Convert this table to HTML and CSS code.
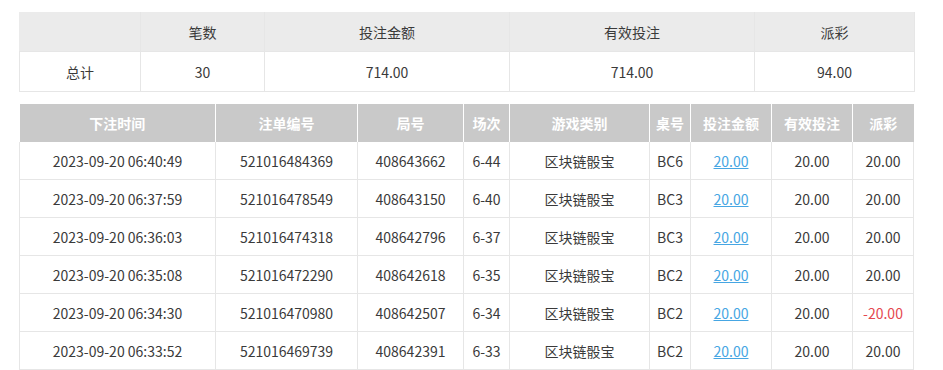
FILE: index.html
```html
<!DOCTYPE html>
<html lang="zh-CN">
<head>
<meta charset="utf-8">
<link rel="stylesheet" href="styles.css">
</head>
<body>
<div class="page">
  <table class="summary">
    <colgroup><col style="width:121px"><col style="width:124px"><col style="width:245px"><col style="width:245px"><col style="width:160px"></colgroup>
    <thead>
      <tr><th></th><th>笔数</th><th>投注金额</th><th>有效投注</th><th>派彩</th></tr>
    </thead>
    <tbody>
      <tr><td>总计</td><td>30</td><td>714.00</td><td>714.00</td><td>94.00</td></tr>
    </tbody>
  </table>

  <table class="detail">
    <colgroup><col style="width:196px"><col style="width:142px"><col style="width:106px"><col style="width:46px"><col style="width:140px"><col style="width:41px"><col style="width:81px"><col style="width:81px"><col style="width:61px"></colgroup>
    <thead>
      <tr><th>下注时间</th><th>注单编号</th><th>局号</th><th>场次</th><th>游戏类别</th><th>桌号</th><th>投注金额</th><th>有效投注</th><th>派彩</th></tr>
    </thead>
    <tbody>
      <tr><td>2023-09-20 06:40:49</td><td>521016484369</td><td>408643662</td><td>6-44</td><td>区块链骰宝</td><td>BC6</td><td><a class="amt" href="#">20.00</a></td><td>20.00</td><td>20.00</td></tr>
      <tr><td>2023-09-20 06:37:59</td><td>521016478549</td><td>408643150</td><td>6-40</td><td>区块链骰宝</td><td>BC3</td><td><a class="amt" href="#">20.00</a></td><td>20.00</td><td>20.00</td></tr>
      <tr><td>2023-09-20 06:36:03</td><td>521016474318</td><td>408642796</td><td>6-37</td><td>区块链骰宝</td><td>BC3</td><td><a class="amt" href="#">20.00</a></td><td>20.00</td><td>20.00</td></tr>
      <tr><td>2023-09-20 06:35:08</td><td>521016472290</td><td>408642618</td><td>6-35</td><td>区块链骰宝</td><td>BC2</td><td><a class="amt" href="#">20.00</a></td><td>20.00</td><td>20.00</td></tr>
      <tr><td>2023-09-20 06:34:30</td><td>521016470980</td><td>408642507</td><td>6-34</td><td>区块链骰宝</td><td>BC2</td><td><a class="amt" href="#">20.00</a></td><td>20.00</td><td class="neg">-20.00</td></tr>
      <tr><td>2023-09-20 06:33:52</td><td>521016469739</td><td>408642391</td><td>6-33</td><td>区块链骰宝</td><td>BC2</td><td><a class="amt" href="#">20.00</a></td><td>20.00</td><td>20.00</td></tr>
    </tbody>
  </table>
</div>
</body>
</html>
```
FILE: styles.css
```css
html, body {
  margin: 0;
  padding: 0;
  background: #fff;
}
body {
  font-family: "Microsoft YaHei", "Noto Sans CJK SC", "Noto Sans", sans-serif;
  font-size: 14px;
  color: #3a3a3a;
}
.page {
  padding: 12px 0 0 19px;
  display: flex;
  flex-direction: column;
  gap: 12px;
}
table {
  border-collapse: collapse;
  table-layout: fixed;
}
.summary {
  width: 895px;
}
.summary th, .summary td {
  border: 1px solid #e6e6e6;
  text-align: center;
  padding: 0;
}
.summary th {
  background: #ebebeb;
  font-weight: normal;
  height: 39px;
  border-top: none;
}
.summary thead th:first-child { border-left-color: #ebebeb; }
.summary td {
  height: 39px;
}
.detail {
  width: 894px;
}
.detail th, .detail td {
  text-align: center;
  padding: 0;
  white-space: nowrap;
}
.detail th {
  background: #c9c9c9;
  color: #fff;
  font-weight: bold;
  height: 38px;
  border-left: 1px solid #fff;
}
.detail th:first-child { border-left: none; }
.detail td {
  height: 37px;
  border: 1px solid #e6e6e6;
  border-top: none;
}
.amt {
  color: #46a6e3;
  text-decoration: underline;
}
.neg {
  color: #e5474f;
}
```
